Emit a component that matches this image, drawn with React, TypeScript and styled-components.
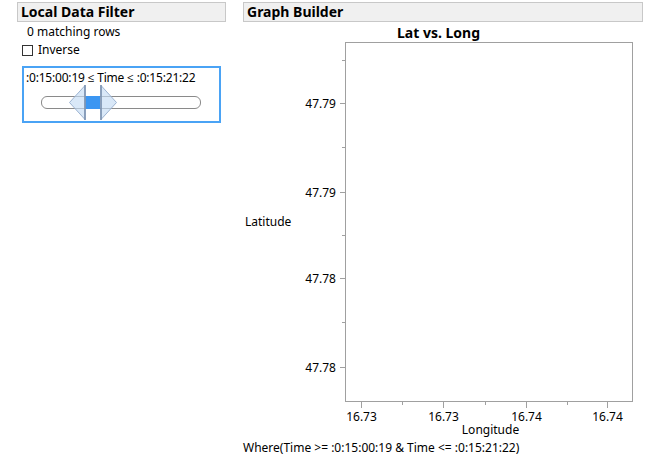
import React from 'react';
import styled, { createGlobalStyle } from 'styled-components';

const Global = createGlobalStyle`
  html, body { margin: 0; padding: 0; background: #fff; }
  body {
    font-family: "Noto Sans", "Open Sans", sans-serif;
    font-size: 12px;
    color: #000;
  }
`;

const Page = styled.div`
  display: flex;
  align-items: flex-start;
  padding: 2px 0 0 17px;
  width: 645px;
  height: 458px;
  box-sizing: border-box;
  overflow: hidden;
`;

const FilterColumn = styled.div`
  width: 209px;
  display: flex;
  flex-direction: column;
`;

const GraphColumn = styled.div`
  width: 400px;
  margin-left: 17px;
  display: flex;
  flex-direction: column;
`;

const PanelHeader = styled.div`
  height: 20px;
  box-sizing: border-box;
  border: 1px solid #c8c8c8;
  background: #f0f0f0;
  font-weight: 700;
  font-size: 14px;
  line-height: 18px;
  padding-left: 3px;
  white-space: nowrap;
`;

const InfoLine = styled.div`
  margin-top: 2px;
  padding-left: 10px;
  line-height: 16px;
  white-space: nowrap;
`;

const CheckRow = styled.label`
  margin-top: 2px;
  padding-left: 5px;
  height: 16px;
  display: flex;
  align-items: center;
  gap: 5px;
  line-height: 16px;
`;

const CheckBox = styled.span`
  width: 11px;
  height: 11px;
  box-sizing: border-box;
  border: 1px solid #333;
  background: #fff;
`;

const FilterBox = styled.div`
  margin: 8px 0 0 5px;
  width: 199px;
  height: 57px;
  box-sizing: border-box;
  border: 2px solid #4aa3f5;
  display: flex;
  flex-direction: column;
`;

const RangeText = styled.div`
  padding: 2px 0 0 2px;
  line-height: 16px;
  white-space: nowrap;
  letter-spacing: -0.2px;
`;

const SliderArea = styled.div`
  margin: -1px 0 0 17px;
  width: 160px;
  height: 34px;
  display: flex;
  flex-direction: column;
`;

const Track = styled.div`
  position: relative;
  margin-top: 11px;
  height: 13px;
  box-sizing: border-box;
  border: 1px solid #8a8a8a;
  border-radius: 6px;
  background: #fff;
`;

const Fill = styled.div`
  position: absolute;
  top: -1px;
  height: 13px;
  background: #3b96f2;
`;

const Thumb = styled.svg`
  position: absolute;
  top: -12px;
  overflow: visible;
`;

const Title = styled.div`
  width: 391px;
  text-align: center;
  font-weight: 700;
  font-size: 14px;
  line-height: 18px;
  margin-top: 2px;
`;

const ChartRow = styled.div`
  display: flex;
  align-items: flex-start;
`;

const YTitle = styled.div`
  width: 57px;
  height: 359px;
  display: flex;
  align-items: center;
  padding-left: 2px;
  box-sizing: border-box;
`;

const XTitle = styled.div`
  padding-left: 104px;
  width: 287px;
  text-align: center;
  line-height: 16px;
`;

const WhereLine = styled.div`
  margin-top: 2px;
  line-height: 16px;
  white-space: nowrap;
`;

const Plot = styled.svg`
  overflow: visible;
  font-family: "Noto Sans", "Open Sans", sans-serif;
  font-size: 12px;
`;

const yMajor = [
  { y: 61, label: '47.79' },
  { y: 150, label: '47.79' },
  { y: 236, label: '47.78' },
  { y: 325, label: '47.78' },
];
const yMinor = [18, 105, 193, 280];
const xMajor = [
  { x: 63, label: '16.73' },
  { x: 145, label: '16.73' },
  { x: 228, label: '16.74' },
  { x: 309, label: '16.74' },
];
const xMinor = [104, 187, 269];

function LeftThumb() {
  return (
    <Thumb width="17" height="35" viewBox="0 0 17 35" style={{ left: 27 }}>
      <polygon points="16,0.5 0.5,17.5 16,34.5" fill="rgba(196,220,245,0.65)" stroke="#9db4d2" strokeWidth="1" />
      <line x1="16" y1="0" x2="16" y2="35" stroke="#7c92b0" strokeWidth="1.6" />
    </Thumb>
  );
}

function RightThumb() {
  return (
    <Thumb width="17" height="35" viewBox="0 0 17 35" style={{ left: 58 }}>
      <polygon points="1,0.5 16.5,17.5 1,34.5" fill="rgba(196,220,245,0.65)" stroke="#9db4d2" strokeWidth="1" />
      <line x1="1" y1="0" x2="1" y2="35" stroke="#7c92b0" strokeWidth="1.6" />
    </Thumb>
  );
}

export default function App() {
  return (
    <>
      <Global />
      <Page>
        <FilterColumn>
          <PanelHeader>Local Data Filter</PanelHeader>
          <InfoLine>0 matching rows</InfoLine>
          <CheckRow>
            <CheckBox />
            Inverse
          </CheckRow>
          <FilterBox>
            <RangeText>:0:15:00:19 ≤ Time ≤ :0:15:21:22</RangeText>
            <SliderArea>
              <Track>
                <Fill style={{ left: 43, width: 15 }} />
                <LeftThumb />
                <RightThumb />
              </Track>
            </SliderArea>
          </FilterBox>
        </FilterColumn>
        <GraphColumn>
          <PanelHeader>Graph Builder</PanelHeader>
          <Title>Lat vs. Long</Title>
          <ChartRow>
            <YTitle>Latitude</YTitle>
            <Plot width="345" height="380" viewBox="0 0 345 380">
              <rect x="47.5" y="0.5" width="287" height="359" fill="#fff" stroke="#a0a0a0" />
              {yMinor.map((y) => (
                <line key={'ym' + y} x1="44" y1={y + 0.5} x2="47" y2={y + 0.5} stroke="#a0a0a0" />
              ))}
              {yMajor.map((t, i) => (
                <g key={'yM' + i}>
                  <line x1="42" y1={t.y + 0.5} x2="47" y2={t.y + 0.5} stroke="#a0a0a0" />
                  <text x="38" y={t.y + 0.5} textAnchor="end" dominantBaseline="central" fill="#000">
                    {t.label}
                  </text>
                </g>
              ))}
              {xMinor.map((x) => (
                <line key={'xm' + x} x1={x + 0.5} y1="360" x2={x + 0.5} y2="363" stroke="#a0a0a0" />
              ))}
              {xMajor.map((t, i) => (
                <g key={'xM' + i}>
                  <line x1={t.x + 0.5} y1="360" x2={t.x + 0.5} y2="366" stroke="#a0a0a0" />
                  <text x={t.x + 0.5} y="374" textAnchor="middle" dominantBaseline="central" fill="#000">
                    {t.label}
                  </text>
                </g>
              ))}
            </Plot>
          </ChartRow>
          <XTitle>Longitude</XTitle>
          <WhereLine>Where(Time &gt;= :0:15:00:19 &amp; Time &lt;= :0:15:21:22)</WhereLine>
        </GraphColumn>
      </Page>
    </>
  );
}
